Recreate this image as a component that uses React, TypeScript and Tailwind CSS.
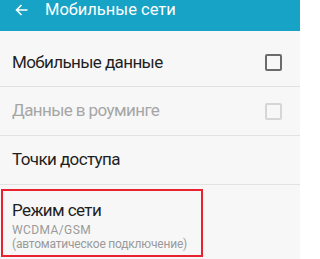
function Checkbox({ disabled }: { disabled?: boolean }) {
  return (
    <div
      className={`h-[17px] w-[17px] rounded-[2px] border-2 ${
        disabled ? "border-[#d6d6d6]" : "border-[#6b6b6b]"
      }`}
    />
  );
}

export default function App() {
  return (
    <div className="h-[259px] w-[300px] overflow-hidden bg-[#f7f7f7] font-['Roboto',sans-serif]">
      <div className="flex h-[31px] items-start bg-[#16a3c5] pl-[15px] pt-[1px] text-white">
        <svg width="13" height="12" viewBox="0 0 13 12" className="mt-[3px]">
          <path
            d="M12.5 6H1.5M6.5 1L1.5 6l5 5"
            fill="none"
            stroke="white"
            strokeWidth="1.6"
          />
        </svg>
        <span className="ml-[17px] text-[16.5px] leading-[18px]">Мобильные сети</span>
      </div>

      <div className="flex h-[56px] items-center justify-between border-b border-[#e2e2e2] pl-[12px] pr-[18px] pt-[8px]">
        <span className="text-[17px] tracking-[-0.6px] text-[#1f1f1f]">Мобильные данные</span>
        <Checkbox />
      </div>

      <div className="flex h-[49px] items-center justify-between border-b border-[#e2e2e2] pl-[12px] pr-[18px]">
        <span className="text-[17px] tracking-[-0.6px] text-[#a6a6a6]">Данные в роуминге</span>
        <Checkbox disabled />
      </div>

      <div className="flex h-[49px] items-center border-b border-[#e2e2e2] pl-[12px]">
        <span className="text-[17px] tracking-[-0.6px] text-[#1f1f1f]">Точки доступа</span>
      </div>

      <div className="pl-[1px] pt-[4px]">
        <div className="w-[202px] border-2 border-[#e8222e] pl-[9px] pt-[9px] pb-[4px]">
          <div className="text-[17px] leading-[20px] tracking-[-0.6px] text-[#1f1f1f]">Режим сети</div>
          <div className="mt-[3px] text-[12px] leading-[14px] tracking-[0.4px] text-[#9a9a9a]">WCDMA/GSM</div>
          <div className="text-[12px] leading-[14px] tracking-[-0.2px] text-[#9a9a9a]">(автоматическое подключение)</div>
        </div>
      </div>
    </div>
  );
}
